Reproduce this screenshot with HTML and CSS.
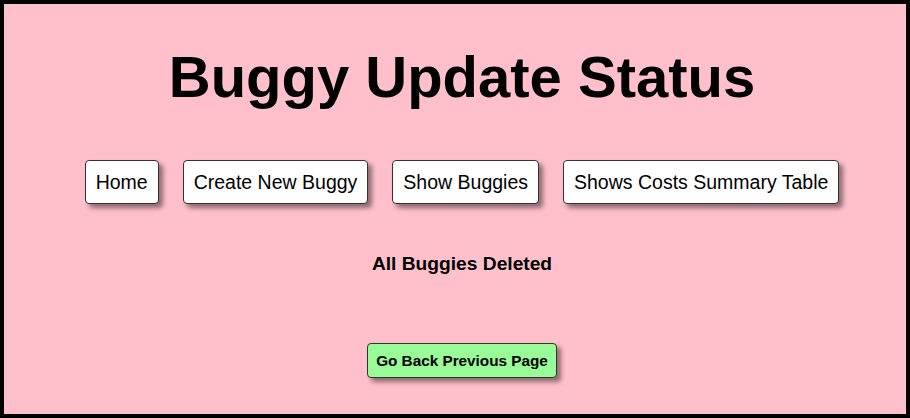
FILE: index.html
```html
<!DOCTYPE html>
<html lang="en">
<head>
<meta charset="utf-8">
<title>Buggy Update Status</title>
<link rel="stylesheet" href="styles.css">
</head>
<body>
<div class="frame">
  <h1 class="title">Buggy Update Status</h1>
  <nav class="nav">
    <a class="nav-btn" href="#">Home</a>
    <a class="nav-btn" href="#">Create New Buggy</a>
    <a class="nav-btn" href="#">Show Buggies</a>
    <a class="nav-btn" href="#">Shows Costs Summary Table</a>
  </nav>
  <p class="status">All Buggies Deleted</p>
  <div class="back-row">
    <button class="back-btn" type="button">Go Back Previous Page</button>
  </div>
</div>
</body>
</html>
```
FILE: styles.css
```css
html, body {
  margin: 0;
  padding: 0;
}
body {
  width: 910px;
  height: 418px;
  background: #000;
  font-family: "Liberation Sans", Arial, Helvetica, sans-serif;
  color: #000;
}
.frame {
  box-sizing: border-box;
  width: 910px;
  height: 418px;
  border: 4px solid #000;
  background: #ffc0cb;
  padding: 0 0 0 14px;
  display: flex;
  flex-direction: column;
  align-items: center;
}
.title {
  margin: 41px 0 0;
  font-size: 58px;
  line-height: 64px;
  font-weight: bold;
}
.nav {
  margin-top: 51px;
  display: flex;
  gap: 24px;
}
.nav-btn {
  display: block;
  padding: 10px;
  font-size: 19.5px;
  line-height: 22px;
  color: #000;
  text-decoration: none;
  background: #fff;
  border: 1px solid #333;
  border-radius: 4px;
  box-shadow: 4px 4px 5px rgba(0, 0, 0, 0.45);
}
.status {
  margin: 49px 0 0;
  font-size: 19.2px;
  line-height: 22px;
  font-weight: bold;
}
.back-row {
  margin-top: 68px;
}
.back-btn {
  font-family: inherit;
  font-size: 15.3px;
  line-height: 17px;
  font-weight: bold;
  color: #000;
  padding: 8px;
  background: #98fb98;
  border: 1px solid #333;
  border-radius: 4px;
  box-shadow: 4px 4px 5px rgba(0, 0, 0, 0.45);
}
```
